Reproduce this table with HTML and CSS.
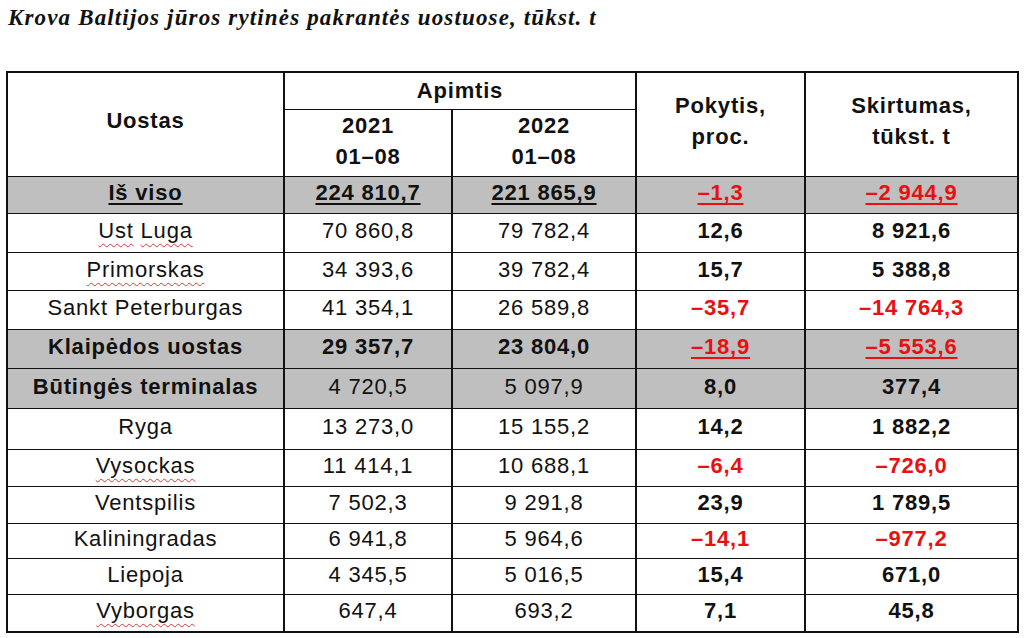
FILE: index.html
```html
<!DOCTYPE html>
<html lang="lt">
<head>
<meta charset="utf-8">
<title>Krova Baltijos jūros rytinės pakrantės uostuose</title>
<link rel="stylesheet" href="styles.css">
</head>
<body>
<div class="title">Krova Baltijos jūros rytinės pakrantės uostuose, tūkst. t</div>
<table class="data">
  <colgroup>
    <col class="c1"><col class="c2"><col class="c3"><col class="c4"><col class="c5">
  </colgroup>
  <thead>
    <tr class="h1">
      <th rowspan="2">Uostas</th>
      <th colspan="2">Apimtis</th>
      <th rowspan="2">Pokytis,<br>proc.</th>
      <th rowspan="2">Skirtumas,<br>tūkst. t</th>
    </tr>
    <tr class="h2">
      <th>2021<br>01–08</th>
      <th>2022<br>01–08</th>
    </tr>
  </thead>
  <tbody>
    <tr class="gray r1">
      <td class="b"><span class="ul">Iš viso</span></td>
      <td class="b"><span class="ul">224 810,7</span></td>
      <td class="b"><span class="ul">221 865,9</span></td>
      <td class="b red"><span class="ul">–1,3</span></td>
      <td class="b red"><span class="ul">–2 944,9</span></td>
    </tr>
    <tr class="r2">
      <td><span class="sp">Ust</span> <span class="sp">Luga</span></td>
      <td>70 860,8</td><td>79 782,4</td>
      <td class="b">12,6</td><td class="b">8 921,6</td>
    </tr>
    <tr class="r3">
      <td><span class="sp">Primorskas</span></td>
      <td>34 393,6</td><td>39 782,4</td>
      <td class="b">15,7</td><td class="b">5 388,8</td>
    </tr>
    <tr class="r4">
      <td>Sankt Peterburgas</td>
      <td>41 354,1</td><td>26 589,8</td>
      <td class="b red">–35,7</td><td class="b red">–14 764,3</td>
    </tr>
    <tr class="gray r5">
      <td class="b">Klaipėdos uostas</td>
      <td class="b">29 357,7</td><td class="b">23 804,0</td>
      <td class="b red"><span class="ul">–18,9</span></td><td class="b red"><span class="ul">–5 553,6</span></td>
    </tr>
    <tr class="gray r6">
      <td class="b">Būtingės terminalas</td>
      <td>4 720,5</td><td>5 097,9</td>
      <td class="b">8,0</td><td class="b">377,4</td>
    </tr>
    <tr class="r7">
      <td>Ryga</td>
      <td>13 273,0</td><td>15 155,2</td>
      <td class="b">14,2</td><td class="b">1 882,2</td>
    </tr>
    <tr class="r8">
      <td><span class="sp">Vysockas</span></td>
      <td>11 414,1</td><td>10 688,1</td>
      <td class="b red">–6,4</td><td class="b red">–726,0</td>
    </tr>
    <tr class="r9">
      <td>Ventspilis</td>
      <td>7 502,3</td><td>9 291,8</td>
      <td class="b">23,9</td><td class="b">1 789,5</td>
    </tr>
    <tr class="r10">
      <td>Kaliningradas</td>
      <td>6 941,8</td><td>5 964,6</td>
      <td class="b red">–14,1</td><td class="b red">–977,2</td>
    </tr>
    <tr class="r11">
      <td>Liepoja</td>
      <td>4 345,5</td><td>5 016,5</td>
      <td class="b">15,4</td><td class="b">671,0</td>
    </tr>
    <tr class="r12">
      <td><span class="sp">Vyborgas</span></td>
      <td>647,4</td><td>693,2</td>
      <td class="b">7,1</td><td class="b">45,8</td>
    </tr>
  </tbody>
</table>
</body>
</html>
```

FILE: styles.css
```css
html, body {
  margin: 0;
  padding: 0;
  background: #ffffff;
}

body {
  width: 1024px;
  height: 638px;
  overflow: hidden;
}

.title {
  font-family: "Liberation Serif", "Times New Roman", serif;
  font-weight: bold;
  font-style: italic;
  font-size: 23px;
  line-height: 24px;
  color: #111;
  padding: 6px 0 0 8px;
  height: 33px;
  letter-spacing: 1.15px;
}

.data {
  margin: 32px 0 0 6px;
  border-collapse: collapse;
  table-layout: fixed;
  width: 1011px;
  border: 2px solid #111;
  font-family: "Liberation Sans", Arial, sans-serif;
  font-size: 22px;
  letter-spacing: 0.8px;
  color: #111;
}

.c1 { width: 277px; }
.c2 { width: 168px; }
.c3 { width: 184px; }
.c4 { width: 169px; }
.c5 { width: 213px; }

.data th,
.data td {
  border-top: 1px solid #111;
  border-bottom: 1px solid #111;
  border-left: 2px solid #111;
  border-right: 2px solid #111;
  text-align: center;
  vertical-align: middle;
  padding: 0;
}

.data th {
  font-weight: bold;
  line-height: 31px;
}

.data td {
  font-weight: normal;
  line-height: 26px;
  padding-bottom: 3px;
}

.h1 { height: 37px; }
.h1 th { padding-top: 0; }
.h2 { height: 67px; }
.h2 th { padding-bottom: 4px; }
.h1 th[rowspan] { padding-bottom: 7px; }

.r1 { height: 37px; }
.r2 { height: 39px; }
.r3 { height: 38px; }
.r4 { height: 39px; }
.r5 { height: 39px; }
.r6 { height: 40px; }
.r7 { height: 41px; }
.r8 { height: 37px; }
.r9 { height: 37px; }
.r10 { height: 35px; }
.r11 { height: 36px; }
.r12 { height: 38px; }

.gray td {
  background: #bfbfbf;
}

.data td.b {
  font-weight: bold;
}

.red {
  color: #e81010;
}

.ul {
  text-decoration: underline;
  text-decoration-thickness: 2px;
  text-underline-offset: 3px;
}

.sp {
  text-decoration: underline wavy #d23a3a;
  text-decoration-thickness: 1px;
  text-underline-offset: 5px;
}
```
